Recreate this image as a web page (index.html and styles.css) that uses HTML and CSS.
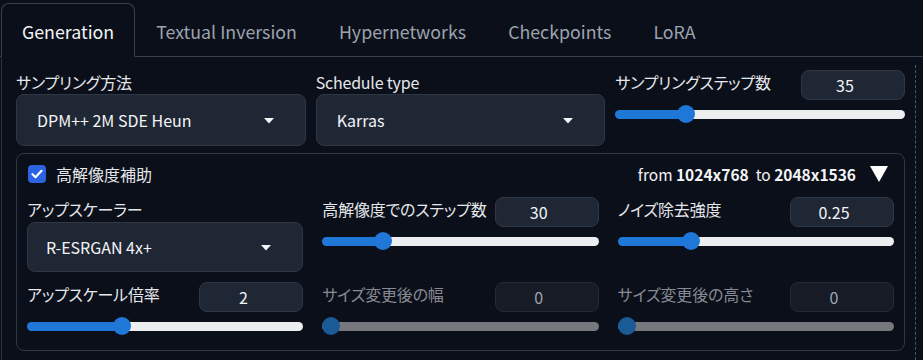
FILE: index.html
```html
<!DOCTYPE html>
<html lang="ja">

<head>
    <meta charset="UTF-8">
    <meta name="viewport" content="width=device-width, initial-scale=1.0">
    <title>txt2img</title>
    <link rel="stylesheet" href="styles.css">
</head>

<body>
    <div class="tabs">
        <div class="tab-nav">
            <button class="tab selected">Generation</button>
            <button class="tab">Textual Inversion</button>
            <button class="tab">Hypernetworks</button>
            <button class="tab">Checkpoints</button>
            <button class="tab">LoRA</button>
        </div>

        <div class="tab-body">
            <div class="tab-panel">
                <!-- 上段: サンプラー / スケジューラ / ステップ数 -->
                <div class="row row-top">
                    <div class="block">
                        <span class="lbl">サンプリング方法</span>
                        <div class="dropdown">
                            <span>DPM++ 2M SDE Heun</span>
                            <svg class="caret" width="10" height="6" viewBox="0 0 10 6"><path d="M0 0h10L5 5.5z" fill="#f3f4f6"/></svg>
                        </div>
                    </div>
                    <div class="block">
                        <span class="lbl">Schedule type</span>
                        <div class="dropdown">
                            <span>Karras</span>
                            <svg class="caret" width="10" height="6" viewBox="0 0 10 6"><path d="M0 0h10L5 5.5z" fill="#f3f4f6"/></svg>
                        </div>
                    </div>
                    <div class="block">
                        <div class="slider-head">
                            <span class="lbl">サンプリングステップ数</span>
                            <input class="num" type="number" value="35">
                        </div>
                        <input class="range" type="range" min="1" max="150" value="35" style="--fill: 24.5%">
                    </div>
                </div>

                <!-- 高解像度補助 -->
                <div class="accordion">
                    <div class="acc-head">
                        <label class="check">
                            <span class="box">
                                <svg width="12" height="10" viewBox="0 0 12 10"><path d="M1.5 5.2l3 3L10.5 1.8" fill="none" stroke="#fff" stroke-width="2.2" stroke-linecap="round" stroke-linejoin="round"/></svg>
                            </span>
                            高解像度補助
                        </label>
                        <div class="acc-info">
                            <span>from <b>1024x768</b>&nbsp; to <b>2048x1536</b></span>
                            <svg class="acc-arrow" width="18" height="16" viewBox="0 0 18 16"><path d="M0 0h18L9 16z" fill="#fff"/></svg>
                        </div>
                    </div>

                    <div class="row row-acc">
                        <div class="block">
                            <span class="lbl">アップスケーラー</span>
                            <div class="dropdown small">
                                <span>R-ESRGAN 4x+</span>
                                <svg class="caret" width="10" height="6" viewBox="0 0 10 6"><path d="M0 0h10L5 5.5z" fill="#f3f4f6"/></svg>
                            </div>
                        </div>
                        <div class="block">
                            <div class="slider-head">
                                <span class="lbl">高解像度でのステップ数</span>
                                <input class="num" type="number" value="30">
                            </div>
                            <input class="range" type="range" min="0" max="150" value="30" style="--fill: 22%">
                        </div>
                        <div class="block">
                            <div class="slider-head">
                                <span class="lbl">ノイズ除去強度</span>
                                <input class="num" type="number" value="0.25">
                            </div>
                            <input class="range" type="range" min="0" max="1" step="0.01" value="0.25" style="--fill: 26.6%">
                        </div>
                    </div>

                    <div class="row row-acc">
                        <div class="block">
                            <div class="slider-head">
                                <span class="lbl">アップスケール倍率</span>
                                <input class="num" type="number" value="2">
                            </div>
                            <input class="range" type="range" min="1" max="4" step="0.05" value="2" style="--fill: 34.4%">
                        </div>
                        <div class="block disabled">
                            <div class="slider-head">
                                <span class="lbl">サイズ変更後の幅</span>
                                <input class="num" type="number" value="0" disabled>
                            </div>
                            <input class="range" type="range" min="0" max="2048" value="0" disabled>
                        </div>
                        <div class="block disabled">
                            <div class="slider-head">
                                <span class="lbl">サイズ変更後の高さ</span>
                                <input class="num" type="number" value="0" disabled>
                            </div>
                            <input class="range" type="range" min="0" max="2048" value="0" disabled>
                        </div>
                    </div>
                </div>
            </div>
            <div class="splitter"></div>
        </div>
    </div>
</body>

</html>
```

FILE: styles.css
```css
* {
    margin: 0;
    padding: 0;
    box-sizing: border-box;
}

body {
    background-color: #0b0f19;
    color: #e5e7eb;
    font-family: "Noto Sans CJK JP", "Noto Sans", sans-serif;
    font-feature-settings: "palt";
    overflow: hidden;
}

.tabs {
    padding-top: 3px;
}

/* タブ */
.tab-nav {
    display: flex;
    height: 54px;
    padding-left: 1px;
    border-bottom: 1px solid #374151;
}

.tab {
    height: 54px;
    padding: 2px 20px 0;
    border: 1px solid transparent;
    border-radius: 8px 8px 0 0;
    background: none;
    color: #9ca3af;
    font-family: inherit;
    font-size: 17.8px;
}

.tab.selected {
    border-color: #374151;
    border-bottom-color: #0b0f19;
    color: #f3f4f6;
    background-color: #0b0f19;
}

.tab-body {
    display: flex;
}

.tab-panel {
    width: 913px;
    margin-left: 1px;
    padding: 13px 9px 0 14px;
    border-left: 1px solid #2a3140;
}

.splitter {
    margin-top: 8px;
    margin-left: 1px;
    height: 300px;
    border-left: 1px dashed #4b5563;
}

.row {
    display: grid;
    grid-template-columns: repeat(3, 1fr);
}

.row-top {
    gap: 10px;
}

.row-acc {
    gap: 19px;
}

.row-acc + .row-acc {
    margin-top: 10px;
}

.lbl {
    display: block;
    font-size: 16px;
    line-height: 24px;
    letter-spacing: -0.2px;
    color: #e5e7eb;
}

.dropdown {
    display: flex;
    align-items: center;
    justify-content: space-between;
    height: 52px;
    padding: 0 31px 0 20px;
    border: 1px solid #2f3846;
    border-radius: 8px;
    background-color: #1f2735;
    color: #f3f4f6;
    font-size: 16px;
}

.dropdown.small {
    height: 50px;
    margin-top: 1px;
    padding-left: 18px;
}

.caret {
    margin-top: 1px;
}

/* スライダー */
.slider-head {
    display: flex;
    justify-content: space-between;
    align-items: flex-start;
}

.num {
    width: 104px;
    height: 30px;
    padding-right: 16px;
    border: 1px solid #2f3846;
    border-radius: 8px;
    background-color: #1f2735;
    color: #f3f4f6;
    font-family: inherit;
    font-size: 16px;
    text-align: center;
    outline: none;
    -moz-appearance: textfield;
}

.num::-webkit-inner-spin-button,
.num::-webkit-outer-spin-button {
    -webkit-appearance: none;
    margin: 0;
}

.range {
    -webkit-appearance: none;
    appearance: none;
    display: block;
    width: 100%;
    height: 18px;
    margin-top: 5px;
    background: transparent;
}

.range::-webkit-slider-runnable-track {
    height: 9px;
    border-radius: 5px;
    background: linear-gradient(to right, #1f77d8 var(--fill), #eceef0 var(--fill));
}

.range::-webkit-slider-thumb {
    -webkit-appearance: none;
    width: 18px;
    height: 18px;
    margin-top: -4.5px;
    border: none;
    border-radius: 50%;
    background-color: #1f77d8;
}

.disabled .lbl {
    color: #858a93;
}

.disabled .num {
    background-color: #161b26;
    border-color: #232a36;
    color: #9ca3af;
}

.disabled .range::-webkit-slider-runnable-track {
    background: #76787e;
}

.disabled .range::-webkit-slider-thumb {
    background-color: #1a5a96;
}

/* 高解像度補助 */
.accordion {
    margin-top: 7px;
    padding: 9px 10px 15px;
    border: 1px solid #2f3846;
    border-radius: 8px;
}

.acc-head {
    display: flex;
    justify-content: space-between;
    align-items: center;
    height: 22px;
    margin-bottom: 12px;
}

.check {
    display: flex;
    align-items: center;
    gap: 10px;
    font-size: 16px;
    color: #e5e7eb;
}

.box {
    display: flex;
    align-items: center;
    justify-content: center;
    width: 18px;
    height: 18px;
    margin-left: 1px;
    border-radius: 4px;
    background-color: #2b63e0;
}

.acc-info {
    display: flex;
    align-items: center;
    gap: 14px;
    padding-right: 6px;
    font-size: 15.5px;
    color: #f3f4f6;
}

.acc-info b {
    font-weight: 700;
}
```
